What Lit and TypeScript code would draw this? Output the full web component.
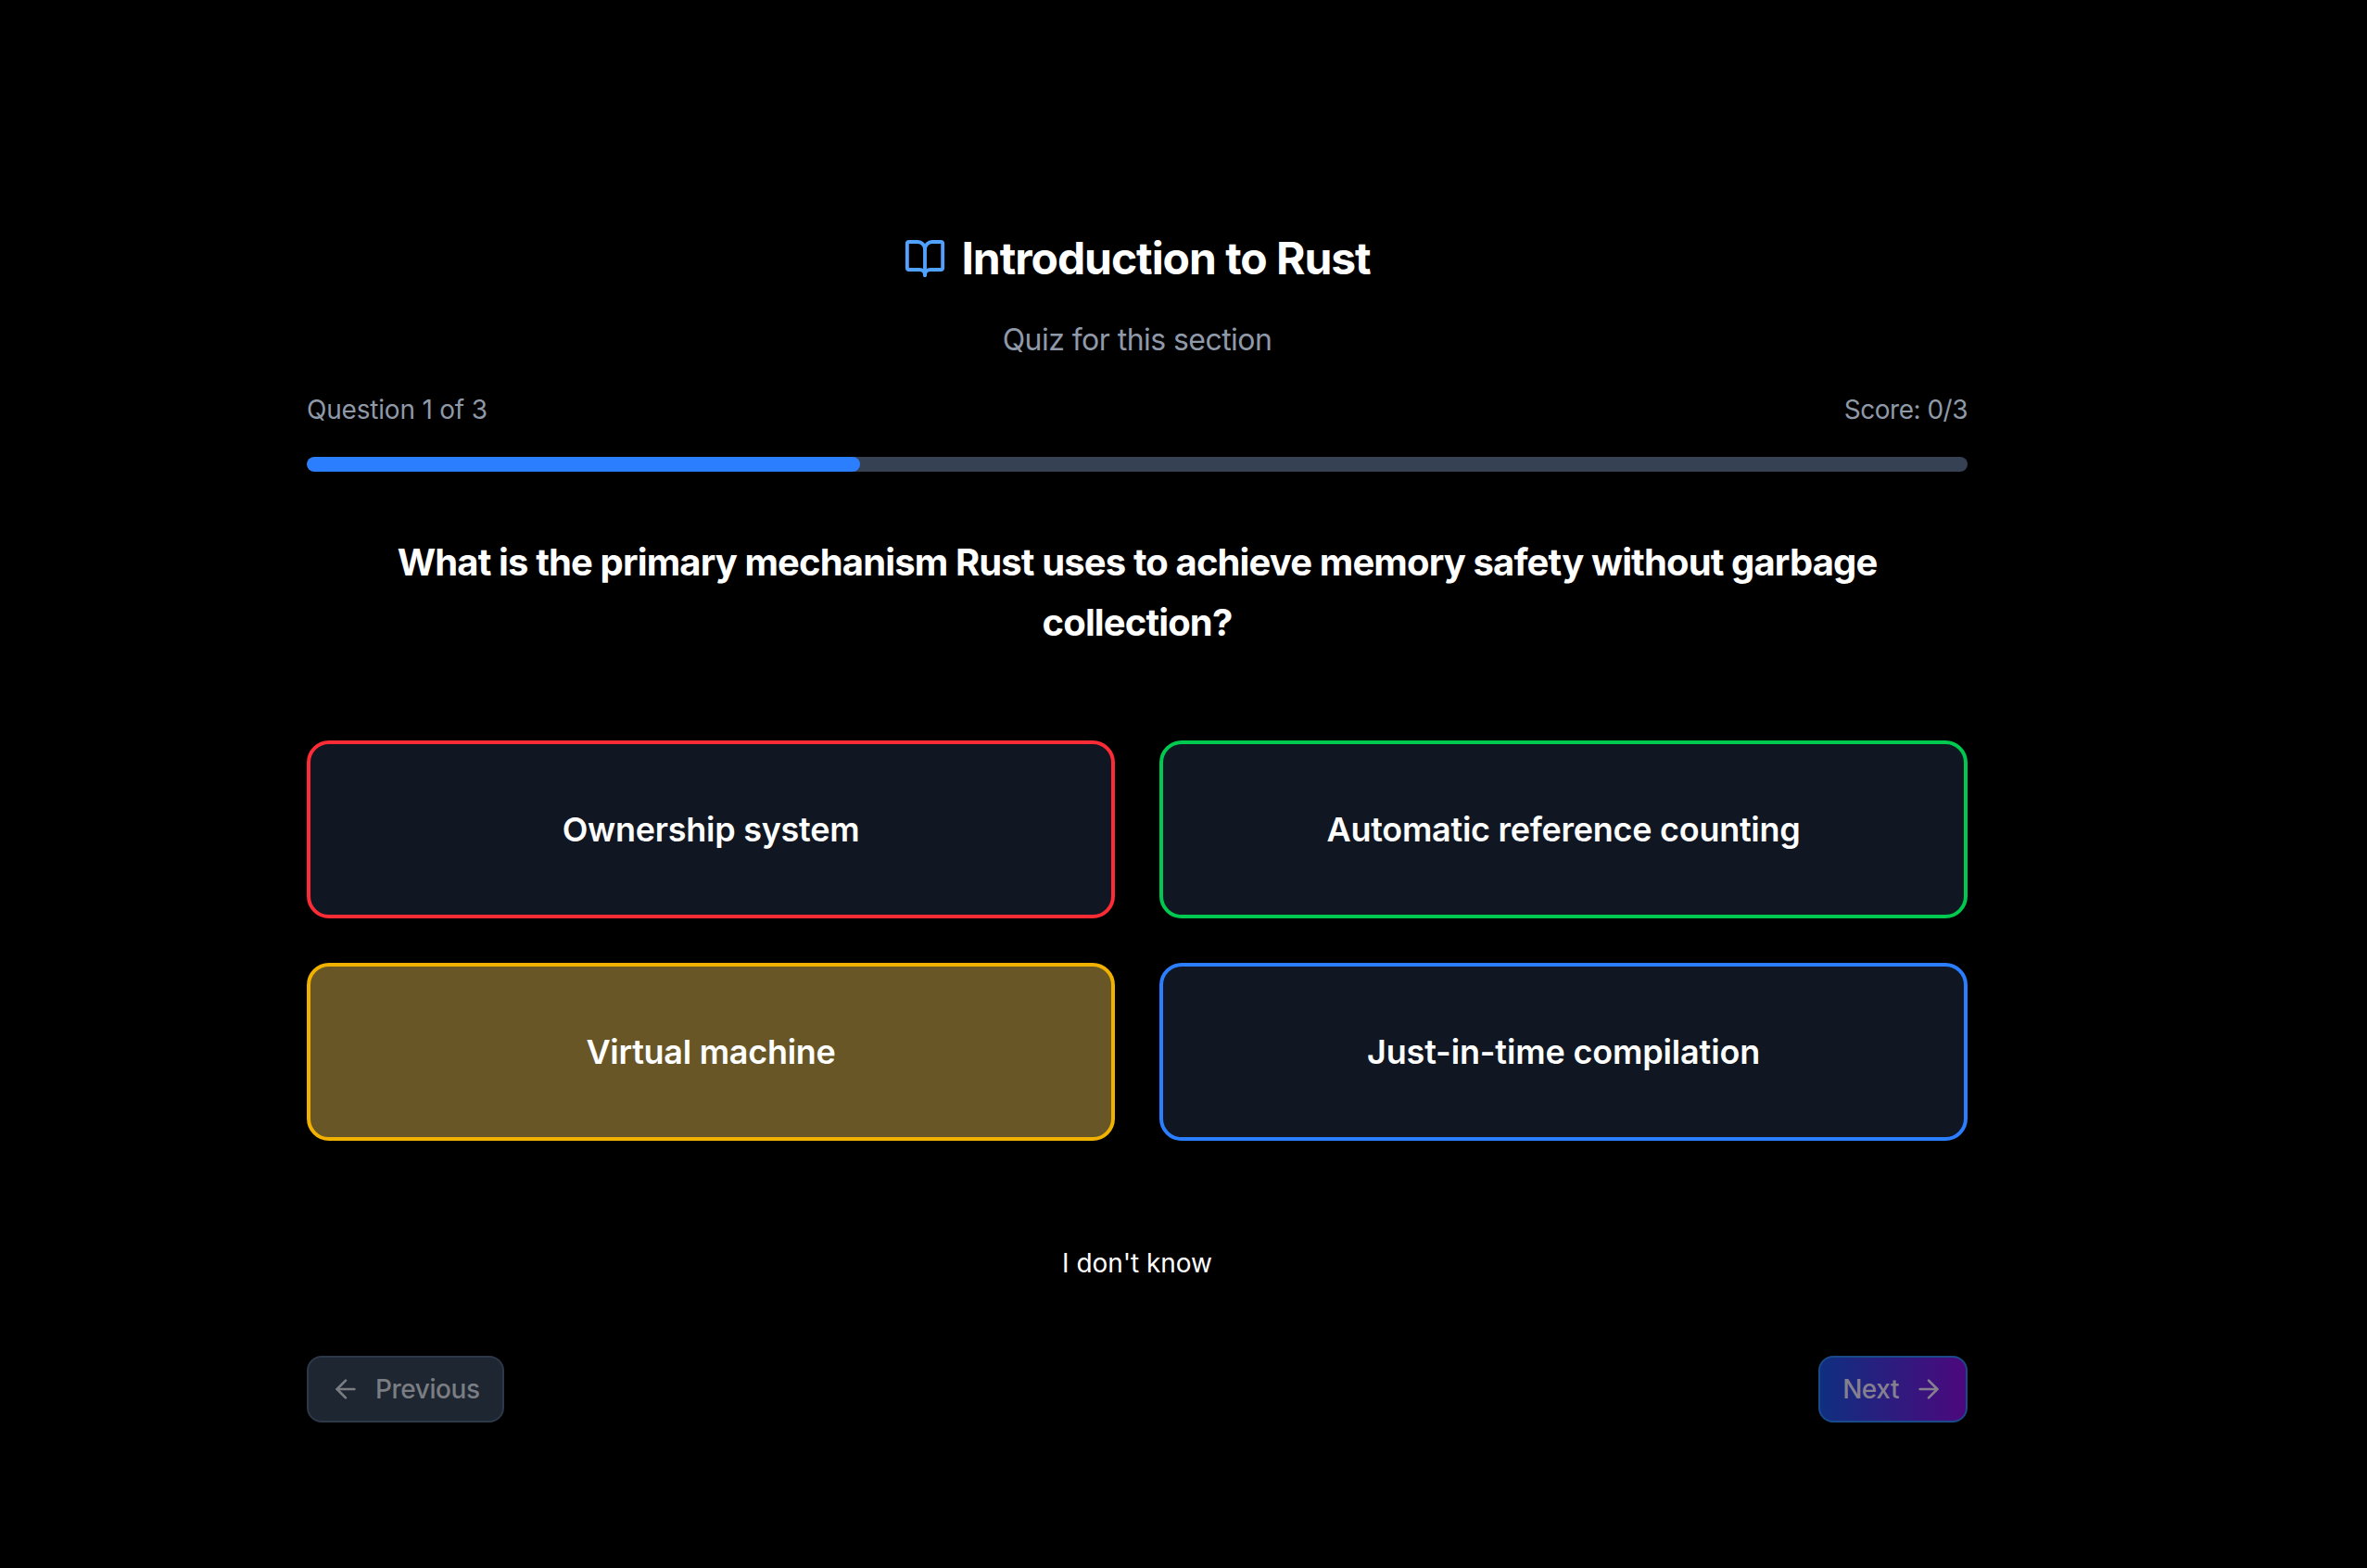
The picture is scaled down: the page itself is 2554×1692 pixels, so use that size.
import { LitElement, html, css } from "lit";
import { customElement } from "lit/decorators.js";

const options = [
  { text: "Ownership system", cls: "red" },
  { text: "Automatic reference counting", cls: "green" },
  { text: "Virtual machine", cls: "yellow" },
  { text: "Just-in-time compilation", cls: "blue" },
];

@customElement("app-root")
export class AppRoot extends LitElement {
  static styles = css`
    :host { display: block; min-height: 1692px; background: #000; color: #fff; font-family: Inter, "Liberation Sans", sans-serif; }
    .wrap { width: 1792px; margin-left: 331px; padding-top: 245px; box-sizing: border-box; }
    .title { display: flex; justify-content: center; align-items: center; gap: 16px; height: 68px; }
    .title svg { display: block; width: 46px; height: 48px; color: #51a2ff; }
    h1 { margin: 0; font-size: 48px; line-height: 68px; font-weight: 700; letter-spacing: -1.05px; }
    .sub { margin-top: 30px; text-align: center; font-size: 32px; line-height: 48px; color: #8f99a8; letter-spacing: -0.55px; font-weight: 400; }
    .meta { display: flex; justify-content: space-between; margin-top: 31px; font-size: 28px; line-height: 40px; color: #8f99a8; letter-spacing: -0.2px; }
    .score { letter-spacing: -0.5px; }
    .track { margin-top: 31px; height: 16px; border-radius: 8px; background: #364153; overflow: hidden; }
    .fill { height: 100%; border-radius: 8px; background: #2b7fff; }
    h2 { margin: 65px 0 0; padding: 0 32px; text-align: center; font-size: 40px; line-height: 65px; font-weight: 700; letter-spacing: -0.87px; }
    .grid { display: grid; grid-template-columns: 1fr 1fr; gap: 48px; margin-top: 95px; }
    .opt { height: 192px; box-sizing: border-box; border: 4px solid; border-radius: 24px; background: #101722; display: flex; align-items: center; justify-content: center; font-size: 36px; font-weight: 600; letter-spacing: -0.28px; }
    .red { border-color: #fb2c36; }
    .green { border-color: #00c950; }
    .yellow { border-color: #f0b100; background: #685627; }
    .blue { border-color: #2b7fff; letter-spacing: -0.16px; }
    .idk { margin-top: 112px; text-align: center; font-size: 28px; line-height: 40px; letter-spacing: -0.05px; }
    .nav { display: flex; justify-content: space-between; margin-top: 80px; }
    .btn { height: 72px; box-sizing: border-box; border-radius: 16px; display: flex; align-items: center; gap: 16px; padding: 0 24px; font-size: 28px; font-weight: 500; border: 2px solid; letter-spacing: -0.45px; }
    .btn svg { width: 32px; height: 32px; display: block; }
    .prev { background: #1e2632; border-color: #2d3848; color: #7a7d82; }
    .next { background: linear-gradient(to right, #0f2f80, #4c087d); border-color: #1a4a8a; color: #85808f; }
  `;

  render() {
    return html`
      <div class="wrap">
        <div class="title">
          <svg viewBox="0 0 24 24" preserveAspectRatio="none" fill="none" stroke="currentColor" stroke-width="2" stroke-linecap="round" stroke-linejoin="round">
            <path d="M12 7v14"/>
            <path d="M3 18a1 1 0 0 1-1-1V4a1 1 0 0 1 1-1h5a4 4 0 0 1 4 4 4 4 0 0 1 4-4h5a1 1 0 0 1 1 1v13a1 1 0 0 1-1 1h-6a3 3 0 0 0-3 3 3 3 0 0 0-3-3z"/>
          </svg>
          <h1>Introduction to Rust</h1>
        </div>
        <div class="sub">Quiz for this section</div>
        <div class="meta"><span>Question 1 of 3</span><span class="score">Score: 0/3</span></div>
        <div class="track"><div class="fill" style="width: 33.33%"></div></div>
        <h2>What is the primary mechanism Rust uses to achieve memory safety without garbage collection?</h2>
        <div class="grid">
          ${options.map((o) => html`<div class="opt ${o.cls}">${o.text}</div>`)}
        </div>
        <div class="idk">I don't know</div>
        <div class="nav">
          <div class="btn prev">
            <svg viewBox="0 0 24 24" fill="none" stroke="currentColor" stroke-width="2" stroke-linecap="round" stroke-linejoin="round"><path d="m12 19-7-7 7-7"/><path d="M19 12H5"/></svg>
            Previous
          </div>
          <div class="btn next">
            Next
            <svg viewBox="0 0 24 24" fill="none" stroke="currentColor" stroke-width="2" stroke-linecap="round" stroke-linejoin="round"><path d="M5 12h14"/><path d="m12 5 7 7-7 7"/></svg>
          </div>
        </div>
      </div>
    `;
  }
}
